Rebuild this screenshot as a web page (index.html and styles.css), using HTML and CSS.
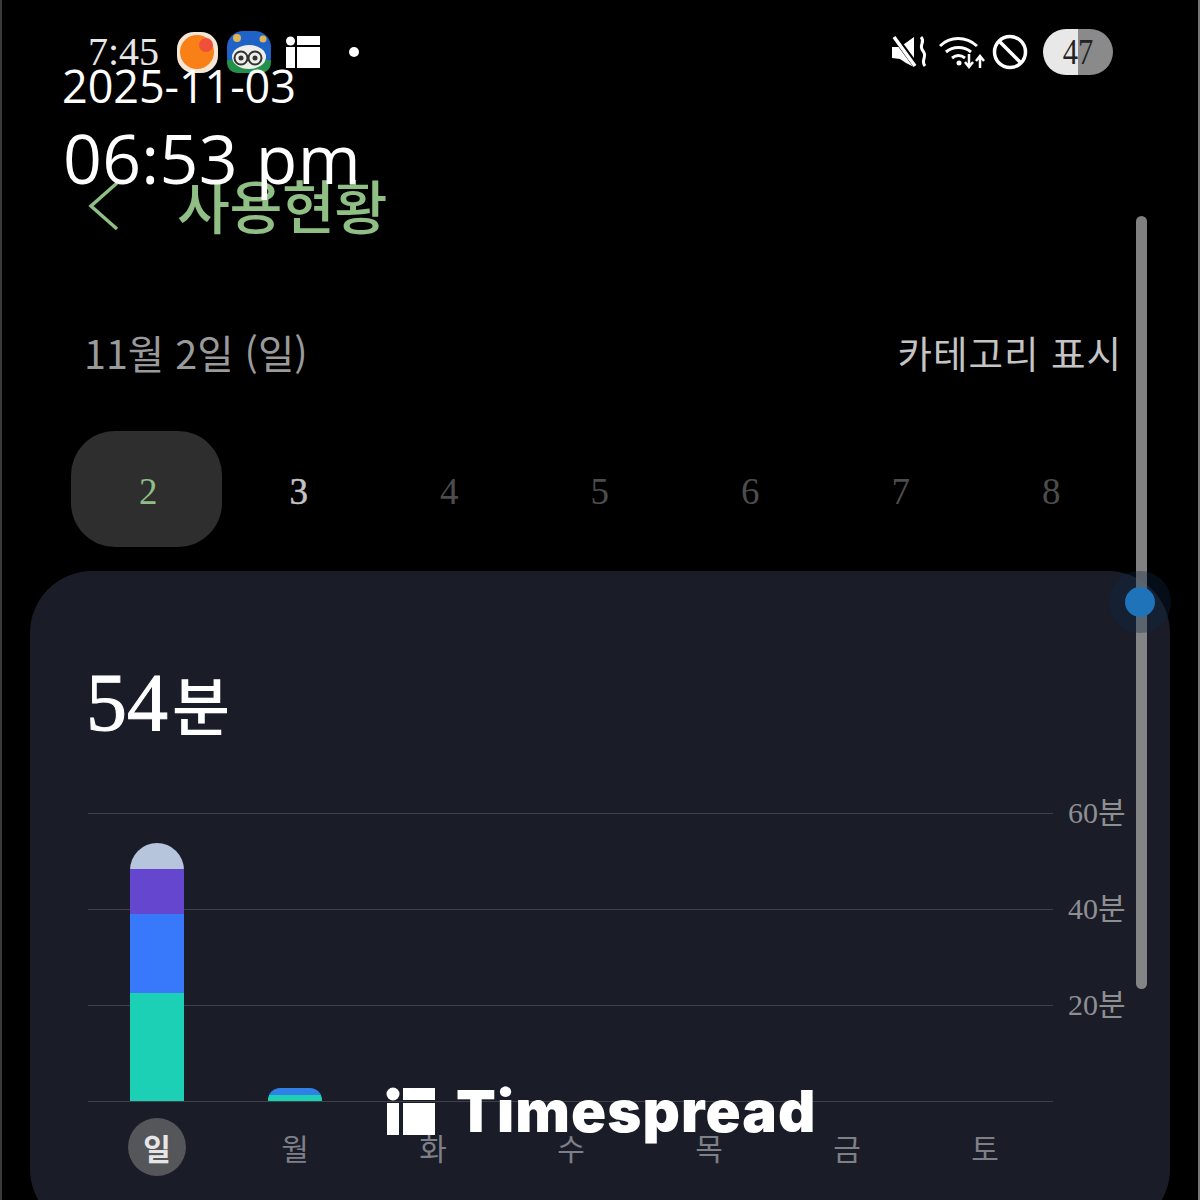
FILE: index.html
```html
<!DOCTYPE html>
<html lang="ko">
<head>
<meta charset="utf-8">
<title>사용현황</title>
<link rel="stylesheet" href="styles.css">
</head>
<body>
<div class="screen">
  <div class="status">
    <div class="status-left">
      <span class="clock">7:45</span>
      <svg class="app" width="44" height="44" viewBox="0 0 44 44"><rect x="1" y="2" width="41" height="41" rx="17" fill="#f6e6d6"/><circle cx="21" cy="22" r="17" fill="#f98016"/><circle cx="30" cy="15" r="7" fill="#f0503a"/></svg>
      <svg class="app" width="46" height="44" viewBox="0 0 46 44"><rect x="1" y="1" width="44" height="42" rx="16" fill="#1f62c8"/><circle cx="11" cy="8" r="4" fill="#dfb555"/><circle cx="37" cy="9" r="3.5" fill="#dfb555"/><path d="M1 30h44v3a10 10 0 0 1-10 10H11A10 10 0 0 1 1 33z" fill="#23914c"/><ellipse cx="23" cy="27" rx="17" ry="12" fill="#f0f0ea"/><circle cx="15" cy="28" r="6.5" fill="none" stroke="#333" stroke-width="2"/><circle cx="29" cy="28" r="6.5" fill="none" stroke="#333" stroke-width="2"/><circle cx="15" cy="28" r="2.5" fill="#333"/><circle cx="29" cy="28" r="2.5" fill="#333"/></svg>
      <svg class="logo-small" width="34" height="32" viewBox="0 0 34 32"><circle cx="4.500" cy="5" r="4.500" fill="#fff"/><rect x="0" y="11" width="9" height="21" fill="#fff"/><rect x="11" y="0" width="23" height="9" fill="#fff"/><rect x="11" y="11" width="23" height="21" fill="#fff"/></svg>
      <span class="dot"></span>
    </div>
    <div class="status-right">
      <svg class="mute" width="36" height="34" viewBox="0 0 36 34"><path d="M0 12h8l14-10v30l-8-4-6-4-8-1z" fill="#fff"/><path d="M2 1l23 31" stroke="#000" stroke-width="6"/><path d="M2 2l21 29" stroke="#fff" stroke-width="3.500"/><path d="M29 2c5 5-3 8 2 14s-3 9 2 15" fill="none" stroke="#fff" stroke-width="3"/></svg>
      <svg class="wifi" width="46" height="36" viewBox="0 0 46 36"><g fill="none" stroke="#fff" stroke-width="3"><path d="M1 12C11 2 27 2 38 12"/><path d="M7 18c7-6 18-6 25 0"/><path d="M13 24c4-3 9-3 13 0"/></g><circle cx="20" cy="29" r="2.500" fill="#fff"/><path d="M30 20v12m-4-4l4 5 4-5M41 34V23m-4 4l4-5 4 5" fill="none" stroke="#fff" stroke-width="2.500"/></svg>
      <svg width="36" height="36" viewBox="0 0 36 36"><circle cx="18" cy="18" r="15.500" fill="none" stroke="#fff" stroke-width="3.500"/><path d="M7 7l22 22" stroke="#fff" stroke-width="3.500"/></svg>
      <div class="battery"><span>47</span></div>
    </div>
  </div>

  <div class="stamp">
    <div class="stamp-date">2025-11-03</div>
    <div class="stamp-time">06:53 pm</div>
  </div>

  <header class="title-row">
    <svg width="32" height="50" viewBox="0 0 32 50"><path d="M29 2L3 25l26 23" fill="none" stroke="#8fbf85" stroke-width="3.500"/></svg>
    <h1>사용현황</h1>
  </header>

  <div class="date-row">
    <span class="date">11월 2일 (일)</span>
    <span class="category">카테고리 표시</span>
  </div>

  <div class="days">
    <span class="day selected">2</span>
    <span class="day next">3</span>
    <span class="day">4</span>
    <span class="day">5</span>
    <span class="day">6</span>
    <span class="day">7</span>
    <span class="day">8</span>
  </div>

  <section class="card">
    <div class="total">54<small>분</small></div>
    <div class="chart">
      <div class="grid">
        <div class="grid-row"><i></i><span>60분</span></div>
        <div class="grid-row"><i></i><span>40분</span></div>
        <div class="grid-row"><i></i><span>20분</span></div>
        <div class="grid-row"><i></i><span></span></div>
      </div>
      <div class="bars">
        <div class="bar-slot"><div class="bar tall"><b class="c1"></b><b class="c2"></b><b class="c3"></b><b class="c4"></b></div></div>
        <div class="bar-slot"><div class="bar short"><b class="c3 s1"></b><b class="c4 s2"></b></div></div>
        <div class="bar-slot"></div>
        <div class="bar-slot"></div>
        <div class="bar-slot"></div>
        <div class="bar-slot"></div>
        <div class="bar-slot"></div>
      </div>
    </div>
    <div class="weekdays">
      <span class="wd active">일</span>
      <span class="wd">월</span>
      <span class="wd">화</span>
      <span class="wd">수</span>
      <span class="wd">목</span>
      <span class="wd">금</span>
      <span class="wd">토</span>
    </div>
  </section>

  <div class="scrollbar"></div>
  <div class="thumb"></div>

  <div class="brand">
    <svg width="50" height="48" viewBox="0 0 50 48"><circle cx="7" cy="7" r="6.500" fill="#fff"/><rect x="1" y="16" width="12" height="32" fill="#fff"/><rect x="17" y="1" width="32" height="12" fill="#fff"/><rect x="17" y="16" width="32" height="32" fill="#fff"/></svg>
    <span>Timespread</span>
  </div>
</div>
</body>
</html>
```
FILE: styles.css
```css
* { box-sizing: border-box; }
html, body { margin: 0; padding: 0; background: #000; }
.screen {
  position: relative;
  width: 1200px;
  height: 1200px;
  overflow: hidden;
  background: #000;
  border-left: 2px solid #3a3a3a;
  border-right: 2px solid #777;
  font-family: "Noto Sans CJK KR", "Noto Sans", sans-serif;
}
.status {
  display: flex;
  justify-content: space-between;
  align-items: center;
  height: 44px;
  margin-top: 30px;
  padding: 0 85px 0 86px;
}
.status-left, .status-right { display: flex; align-items: center; }
.clock {
  font-family: "Liberation Serif", serif;
  font-size: 40px;
  line-height: 44px;
  color: #e6e6e6;
  width: 88px;
  white-space: nowrap;
}
.app { margin-right: 6px; }
.logo-small { margin-left: 8px; }
.dot { width: 10px; height: 10px; border-radius: 50%; background: #fff; margin-left: 29px; }
.status-right { gap: 3px; }
.status-right .mute { margin-right: 8px; }
.status-right .wifi { margin-right: 4px; }
.battery {
  width: 70px;
  height: 46px;
  margin-left: 12px;
  border-radius: 23px;
  background: linear-gradient(90deg, #e8e8e8 0 50%, #8a8a8a 50% 100%);
  display: flex;
  align-items: center;
  justify-content: center;
  color: #222;
  font-family: "Liberation Serif", serif;
  font-size: 36px;
}
.battery span { display: block; transform: scaleX(.85); }
.stamp { position: absolute; left: 60px; top: 56px; color: #fff; font-family: "Open Sans", sans-serif; }
.stamp-date { font-size: 45px; line-height: 60px; letter-spacing: -.1px; }
.stamp-time { font-size: 68px; line-height: 88px; letter-spacing: .3px; margin-left: 1px; margin-top: -2px; }
.title-row {
  display: flex;
  align-items: center;
  height: 60px;
  margin-top: 100px;
  padding-left: 86px;
  gap: 57px;
  color: #8fbf85;
}
.title-row h1 { margin: 0; font-weight: 500; font-size: 57.5px; line-height: 60px; letter-spacing: -.4px; }
.title-row svg { margin-top: 4px; }
.date-row {
  display: flex;
  justify-content: space-between;
  align-items: center;
  height: 50px;
  margin-top: 92px;
  padding: 0 76px 0 82px;
}
.date { font-size: 39.5px; color: #9a9a9a; }
.category { font-size: 37.5px; color: #c4c4c4; letter-spacing: 1px; }
.days {
  display: grid;
  grid-template-columns: repeat(7, 150.500px);
  margin-top: 55px;
  padding-left: 69px;
  height: 116px;
}
.day {
  display: flex;
  align-items: center;
  justify-content: center;
  font-family: "Liberation Serif", serif;
  font-size: 37px;
  color: #4c4c4c;
  padding: 4px 0 0 4px;
}
.day.selected { background: #2e2e2e; border-radius: 44px; color: #8fbf85; }
.day.next { color: #c4c4c4; -webkit-text-stroke: .5px #c4c4c4; }
.card {
  margin: 24px 28px 0;
  height: 660px;
  border-radius: 62px;
  background: #1a1c28;
  padding: 82px 0 0 58px;
}
.total { color: #fff; font-size: 82px; line-height: 100px; font-family: "Liberation Serif", "Noto Sans CJK KR", serif; height: 100px; margin-left: -2px; -webkit-text-stroke: 1px #fff; }
.total small { font-size: 63px; font-family: "Noto Sans CJK KR", sans-serif; letter-spacing: -1px; margin-left: 4px; -webkit-text-stroke: 0; font-weight: 500; }
.chart { position: relative; margin-top: 60px; height: 290px; }
.grid { display: flex; flex-direction: column; gap: 95px; }
.grid-row { display: flex; align-items: center; height: 1px; }
.grid-row i { display: block; width: 965px; height: 1px; background: #3f414a; flex: none; }
.grid-row span { margin-left: 15px; margin-top: -8px; font-size: 30px; color: #8f8f92; white-space: nowrap; font-family: "Liberation Serif", "Noto Sans CJK KR", serif; }
.bars {
  position: absolute;
  left: 0;
  top: 0;
  width: 966px;
  height: 288px;
  display: grid;
  grid-template-columns: repeat(7, 138px);
}
.bar-slot { position: relative; display: flex; align-items: flex-end; justify-content: center; }
.bar { width: 54px; display: flex; flex-direction: column; overflow: hidden; }
.bar b { display: block; }
.tall { height: 258px; border-radius: 27px 27px 0 0; }
.short { height: 13px; border-radius: 12px 12px 0 0; }
.c1 { height: 26px; background: #b6c4dc; }
.c2 { height: 45px; background: #6547cf; }
.c3 { height: 79px; background: #3878fb; }
.c4 { height: 108px; background: #1cd0b6; }
.s1 { height: 7px; background: #3080e8; }
.s2 { height: 6px; }
.weekdays { display: grid; grid-template-columns: repeat(7, 138px); margin-top: 15px; }
.wd { justify-self: center; width: 58px; height: 58px; display: flex; align-items: center; justify-content: center; border-radius: 50%; color: #7f8087; font-size: 30px; }
.wd.active { background: #55565a; color: #e6e6e6; font-weight: 700; }
.scrollbar { position: absolute; left: 1134px; top: 216px; width: 11px; height: 773px; border-radius: 6px; background: rgba(150,150,150,.85); }
.thumb { position: absolute; left: 1123px; top: 587px; width: 30px; height: 30px; border-radius: 50%; background: #1f73b8; box-shadow: 0 0 0 16px rgba(15,40,70,.35); }
.brand { position: absolute; left: 384px; top: 1087px; display: flex; align-items: center; gap: 20px; color: #fff; font-family: Inter, sans-serif; font-weight: 900; font-size: 58px; line-height: 48px; letter-spacing: 1.1px; }
```
